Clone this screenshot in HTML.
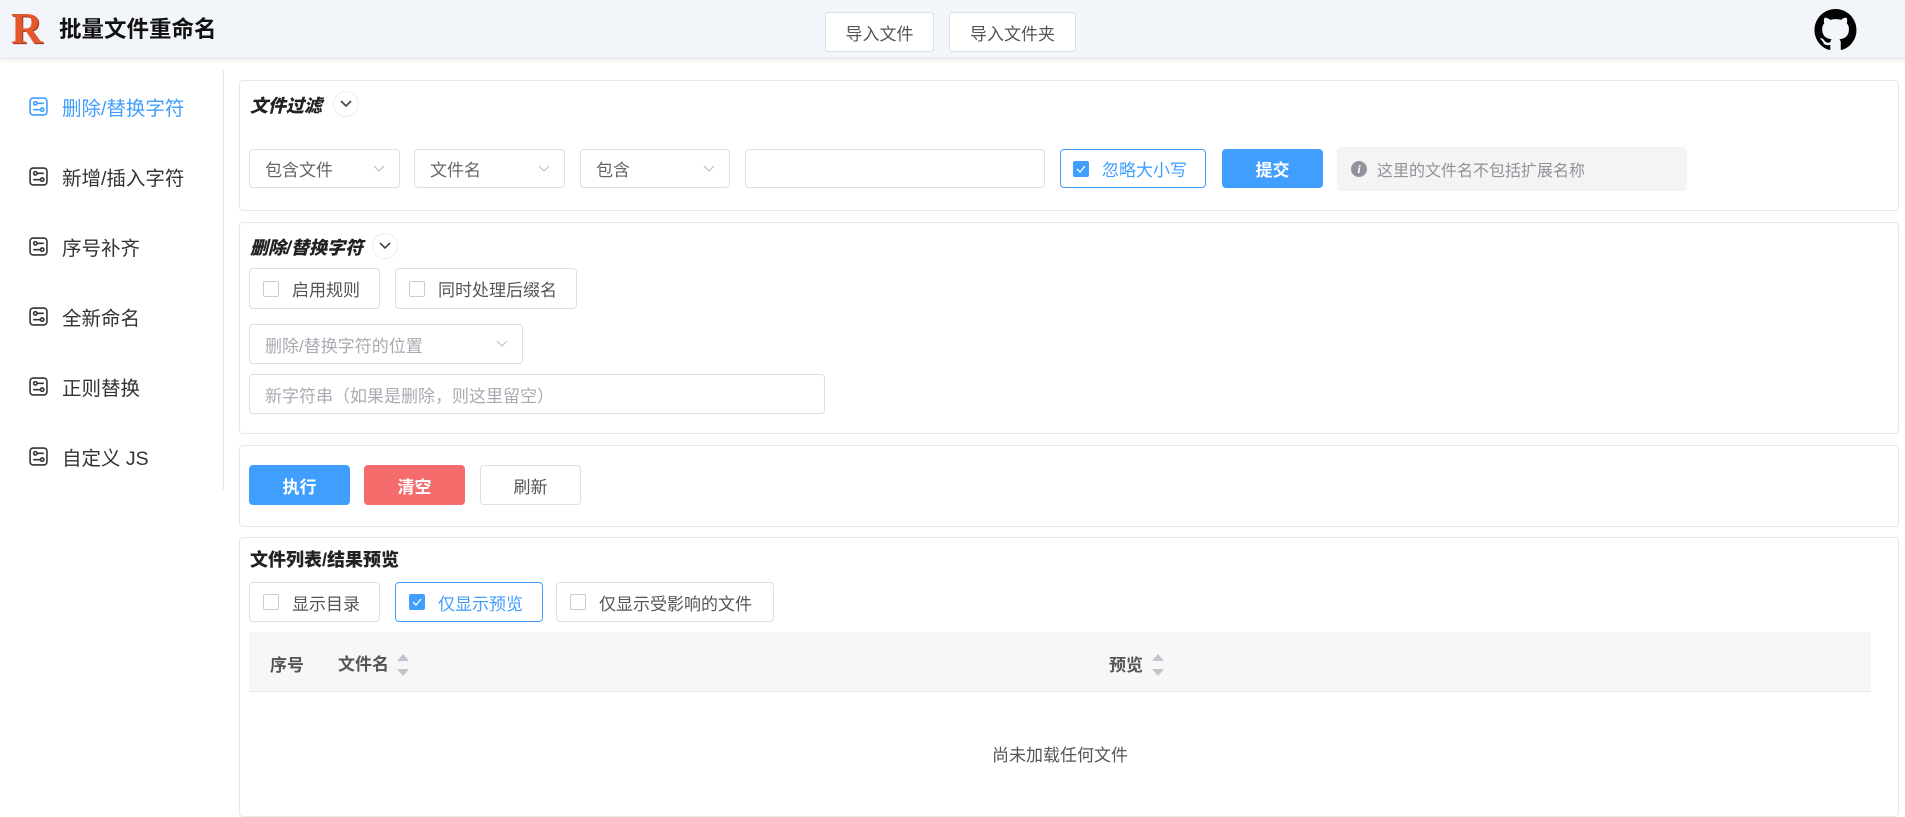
<!DOCTYPE html>
<html><head><meta charset="utf-8"><style>
*{box-sizing:border-box;margin:0;padding:0}
body{width:1905px;height:806px;overflow:hidden;background:#fff;font-family:"Liberation Sans","Noto Sans CJK SC",sans-serif;font-size:17px;color:#333;position:relative}
.a{position:absolute}
.hdr{left:0;top:0;width:1905px;height:59px;background:#f2f5fa;border-bottom:1px solid #e2e5ea;box-shadow:0 2px 4px rgba(0,0,0,.06)}
.btn{position:absolute;border:1px solid #dcdfe6;border-radius:4px;background:#fff;display:flex;align-items:center;justify-content:center;font-size:17px;color:#555}
.card{position:absolute;border:1px solid #e8e8e8;border-radius:4px;background:#fff}
.title{position:absolute;font-weight:900;font-style:italic;font-size:18px;color:#222}
.chev{position:absolute;width:26px;height:26px;border-radius:50%;border:1px solid #eee;display:flex;align-items:center;justify-content:center}
.sel{position:absolute;border:1px solid #dcdfe6;border-radius:4px;background:#fff;color:#666;padding-left:15px;display:flex;align-items:center}
.sel svg{position:absolute;right:14px;top:50%;margin-top:-4px}
.cb{position:absolute;border:1px solid #dcdfe6;border-radius:4px;display:flex;align-items:center;padding-left:13px;color:#555}
.box{width:16px;height:16px;border:1px solid #ccc;border-radius:2px;margin-right:13px;background:#fff}
.cb.on{border-color:#409eff;color:#409eff}
.cb.on .box{background:#409eff;border-color:#409eff;display:flex;align-items:center;justify-content:center}
.side{position:absolute;left:29px;display:flex;align-items:center;font-size:19.5px;color:#333}
.side svg{margin-right:14px}
</style></head><body>
<div class="a hdr"></div>
<div class="a" style="left:11px;top:5px;font-family:'Liberation Serif',serif;font-weight:bold;font-size:44px;color:#e5582e;line-height:48px;text-shadow:1px 1px 0 #9a3718">R</div>
<div class="a" style="left:59px;top:15px;font-size:22.5px;font-weight:bold;color:#111;line-height:30px">批量文件重命名</div>
<div class="btn" style="left:825px;top:12px;width:109px;height:40px">导入文件</div>
<div class="btn" style="left:949px;top:12px;width:127px;height:40px">导入文件夹</div>
<svg class="a" style="left:1814px;top:9px" width="43" height="42" viewBox="0 0 16 16"><path fill="#000" d="M8 0C3.58 0 0 3.58 0 8c0 3.54 2.290 6.53 5.47 7.59.4.07.55-.17.55-.38 0-.19-.01-.82-.01-1.49-2.010.37-2.530-.49-2.690-.94-.09-.23-.48-.94-.82-1.130-.28-.15-.68-.52-.01-.53.63-.01 1.080.58 1.230.82.72 1.210 1.870.87 2.330.66.07-.52.28-.87.51-1.070-1.780-.2-3.640-.89-3.640-3.950 0-.87.31-1.590.82-2.150-.08-.2-.36-1.020.08-2.120 0 0 .67-.21 2.200.82.64-.18 1.320-.27 2-.27.68 0 1.360.09 2 .27 1.530-1.040 2.200-.82 2.200-.82.44 1.100.16 1.920.08 2.120.51.56.82 1.270.82 2.150 0 3.070-1.870 3.750-3.650 3.950.29.25.54.73.54 1.480 0 1.070-.01 1.930-.01 2.200 0 .21.15.46.55.38A8.013 8.013 0 0016 8c0-4.420-3.580-8-8-8z"/></svg>

<!-- sidebar -->
<div class="a" style="left:223px;top:70px;width:1px;height:420px;background:#e6e6e6"></div>
<div class="side" style="top:92px;color:#409eff"><svg width="19" height="19" viewBox="0 0 18 18" fill="none" stroke="#409eff" stroke-width="1.5"><rect x="1" y="1" width="16" height="16" rx="3"/><circle cx="6" cy="6" r="1.6"/><path d="M8 6h6M4 12h7"/><circle cx="12.5" cy="12" r="1.6"/></svg>删除/替换字符</div>
<div class="side" style="top:162px"><svg width="19" height="19" viewBox="0 0 18 18" fill="none" stroke="#333" stroke-width="1.5"><rect x="1" y="1" width="16" height="16" rx="3"/><circle cx="6" cy="6" r="1.6"/><path d="M8 6h6M4 12h7"/><circle cx="12.5" cy="12" r="1.6"/></svg>新增/插入字符</div>
<div class="side" style="top:232px"><svg width="19" height="19" viewBox="0 0 18 18" fill="none" stroke="#333" stroke-width="1.5"><rect x="1" y="1" width="16" height="16" rx="3"/><circle cx="6" cy="6" r="1.6"/><path d="M8 6h6M4 12h7"/><circle cx="12.5" cy="12" r="1.6"/></svg>序号补齐</div>
<div class="side" style="top:302px"><svg width="19" height="19" viewBox="0 0 18 18" fill="none" stroke="#333" stroke-width="1.5"><rect x="1" y="1" width="16" height="16" rx="3"/><circle cx="6" cy="6" r="1.6"/><path d="M8 6h6M4 12h7"/><circle cx="12.5" cy="12" r="1.6"/></svg>全新命名</div>
<div class="side" style="top:372px"><svg width="19" height="19" viewBox="0 0 18 18" fill="none" stroke="#333" stroke-width="1.5"><rect x="1" y="1" width="16" height="16" rx="3"/><circle cx="6" cy="6" r="1.6"/><path d="M8 6h6M4 12h7"/><circle cx="12.5" cy="12" r="1.6"/></svg>正则替换</div>
<div class="side" style="top:442px"><svg width="19" height="19" viewBox="0 0 18 18" fill="none" stroke="#333" stroke-width="1.5"><rect x="1" y="1" width="16" height="16" rx="3"/><circle cx="6" cy="6" r="1.6"/><path d="M8 6h6M4 12h7"/><circle cx="12.5" cy="12" r="1.6"/></svg>自定义 JS</div>

<!-- card 1 -->
<div class="card" style="left:239px;top:80px;width:1660px;height:131px"></div>
<div class="title" style="left:250px;top:92px">文件过滤</div>
<div class="chev" style="left:333px;top:91px"><svg width="12" height="8" viewBox="0 0 12 8"><path d="M1 1l5 5 5-5" stroke="#444" stroke-width="1.6" fill="none"/></svg></div>
<div class="sel" style="left:249px;top:149px;width:151px;height:39px">包含文件<svg width="12" height="7" viewBox="0 0 12 7"><path d="M1 1l5 5 5-5" stroke="#bbb" fill="none"/></svg></div>
<div class="sel" style="left:414px;top:149px;width:151px;height:39px">文件名<svg width="12" height="7" viewBox="0 0 12 7"><path d="M1 1l5 5 5-5" stroke="#bbb" fill="none"/></svg></div>
<div class="sel" style="left:580px;top:149px;width:150px;height:39px">包含<svg width="12" height="7" viewBox="0 0 12 7"><path d="M1 1l5 5 5-5" stroke="#bbb" fill="none"/></svg></div>
<div class="sel" style="left:745px;top:149px;width:300px;height:39px"></div>
<div class="cb on" style="left:1060px;top:149px;width:146px;height:39px;padding-left:12px"><div class="box"><svg width="10" height="8" viewBox="0 0 10 8"><path d="M1 4l3 3 5-6" stroke="#fff" stroke-width="1.3" fill="none"/></svg></div>忽略大小写</div>
<div class="btn" style="left:1222px;top:149px;width:101px;height:39px;background:#409eff;border-color:#409eff;color:#fff;font-weight:bold">提交</div>
<div class="a" style="left:1337px;top:147px;width:350px;height:44px;background:#f4f4f5;border-radius:4px;display:flex;align-items:center;padding-left:14px;color:#909399;font-size:16px"><span style="width:16px;height:16px;border-radius:50%;background:#909399;color:#fff;font-size:12px;font-style:italic;font-weight:bold;display:inline-flex;align-items:center;justify-content:center;margin-right:10px;font-family:'Liberation Serif',serif">i</span>这里的文件名不包括扩展名称</div>

<!-- card 2 -->
<div class="card" style="left:239px;top:222px;width:1660px;height:212px"></div>
<div class="title" style="left:250px;top:234px">删除/替换字符</div>
<div class="chev" style="left:372px;top:233px"><svg width="12" height="8" viewBox="0 0 12 8"><path d="M1 1l5 5 5-5" stroke="#444" stroke-width="1.6" fill="none"/></svg></div>
<div class="cb" style="left:249px;top:268px;width:131px;height:41px"><div class="box"></div>启用规则</div>
<div class="cb" style="left:395px;top:268px;width:182px;height:41px"><div class="box"></div>同时处理后缀名</div>
<div class="sel" style="left:249px;top:324px;width:274px;height:40px;color:#a8abb2">删除/替换字符的位置<svg width="12" height="7" viewBox="0 0 12 7"><path d="M1 1l5 5 5-5" stroke="#bbb" fill="none"/></svg></div>
<div class="sel" style="left:249px;top:374px;width:576px;height:40px;color:#a8abb2">新字符串（如果是删除，则这里留空）</div>

<!-- card 3 -->
<div class="card" style="left:239px;top:445px;width:1660px;height:82px"></div>
<div class="btn" style="left:249px;top:465px;width:101px;height:40px;background:#409eff;border-color:#409eff;color:#fff;font-weight:bold">执行</div>
<div class="btn" style="left:364px;top:465px;width:101px;height:40px;background:#f56c6c;border-color:#f56c6c;color:#fff;font-weight:bold">清空</div>
<div class="btn" style="left:480px;top:465px;width:101px;height:40px">刷新</div>

<!-- card 4 -->
<div class="card" style="left:239px;top:537px;width:1660px;height:280px"></div>
<div class="title" style="left:250px;top:546px;font-style:normal">文件列表/结果预览</div>
<div class="cb" style="left:249px;top:582px;width:131px;height:40px"><div class="box"></div>显示目录</div>
<div class="cb on" style="left:395px;top:582px;width:148px;height:40px"><div class="box"><svg width="10" height="8" viewBox="0 0 10 8"><path d="M1 4l3 3 5-6" stroke="#fff" stroke-width="1.3" fill="none"/></svg></div>仅显示预览</div>
<div class="cb" style="left:556px;top:582px;width:218px;height:40px"><div class="box"></div>仅显示受影响的文件</div>
<div class="a" style="left:249px;top:632px;width:1622px;height:60px;background:#f7f7f7;border-bottom:1px solid #e6e6e6"></div>
<div class="a" style="left:270px;top:651px;font-weight:bold;color:#555">序号</div>
<div class="a" style="left:338px;top:650px;font-weight:bold;color:#555">文件名</div>
<svg class="a" style="left:396px;top:653px" width="14" height="24" viewBox="0 0 14 24"><path d="M7 1l6 7H1z" fill="#c0c4cc"/><path d="M7 23l6-7H1z" fill="#c0c4cc"/></svg>
<div class="a" style="left:1109px;top:651px;font-weight:bold;color:#555">预览</div>
<svg class="a" style="left:1151px;top:653px" width="14" height="24" viewBox="0 0 14 24"><path d="M7 1l6 7H1z" fill="#c0c4cc"/><path d="M7 23l6-7H1z" fill="#c0c4cc"/></svg>
<div class="a" style="left:249px;top:741px;width:1622px;text-align:center;color:#555">尚未加载任何文件</div>
</body></html>
